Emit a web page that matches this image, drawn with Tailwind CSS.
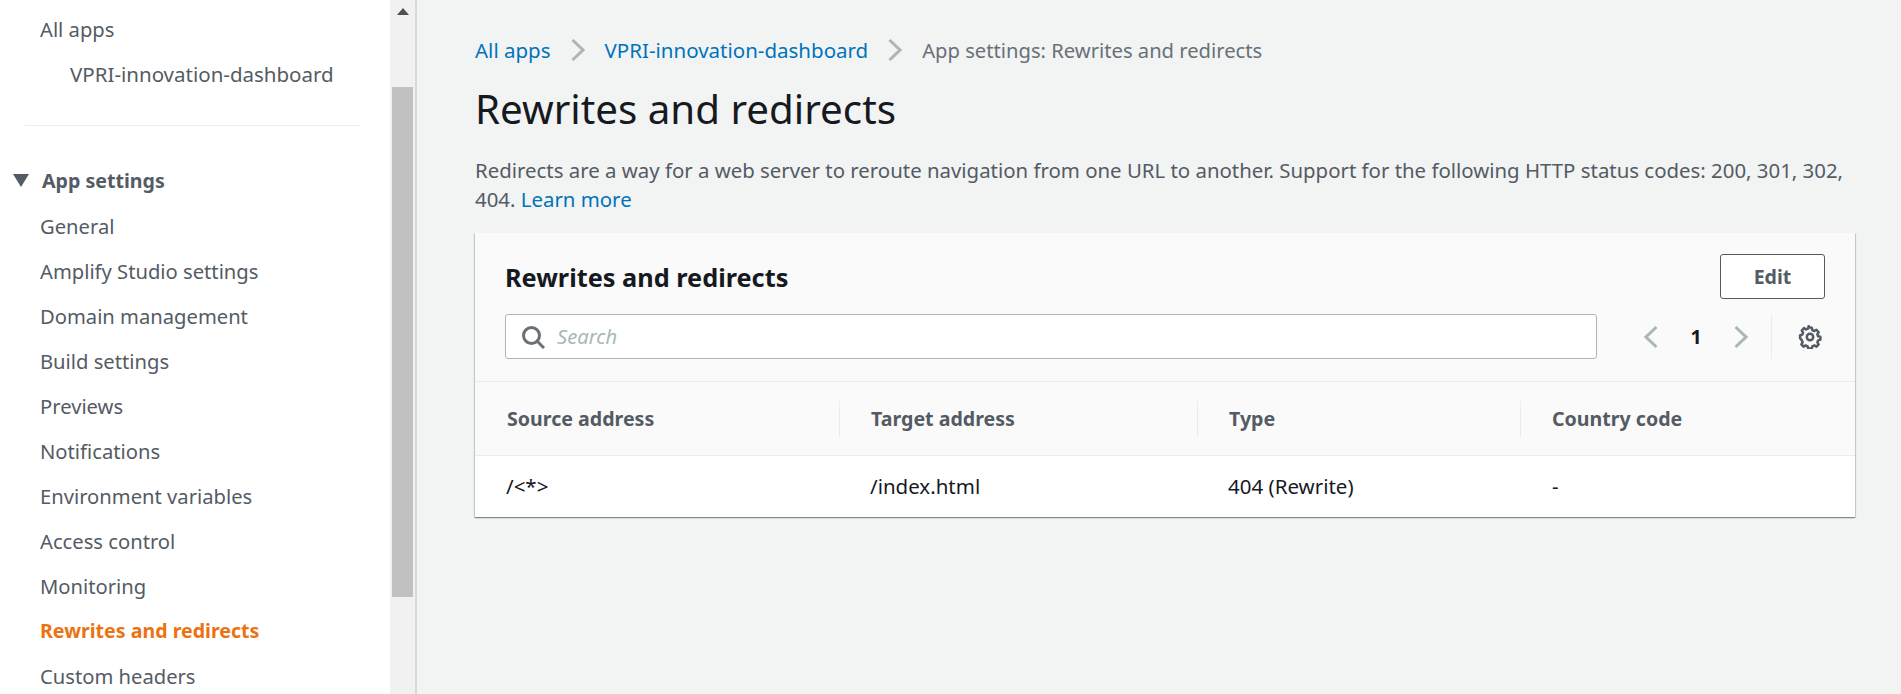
<!DOCTYPE html>
<html lang="en">
<head>
    <meta charset="UTF-8">
    <title>Rewrites and redirects</title>
    <script src="https://cdn.jsdelivr.net/npm/@tailwindcss/browser@4"></script>
</head>
<body class="h-[694px] overflow-hidden bg-[#f2f3f3] font-['Noto_Sans',sans-serif] text-[20.2px] text-[#545b64]">
    <div class="flex h-[694px]">
        <!-- Sidebar -->
        <aside class="flex w-[417px] shrink-0 border-r-2 border-[#d5dbdb] bg-white">
            <nav class="w-[390px] shrink-0 overflow-hidden">
                <div class="pl-[40px] pt-[14px] leading-[30px]">All apps</div>
                <div class="pl-[70px] pt-[15px] text-[20.5px] leading-[30px]">VPRI-innovation-dashboard</div>
                <div class="ml-[25px] mr-[30px] mt-[36px] border-t border-[#eaeded]"></div>
                <div class="mt-[40px] flex items-center pl-[13px] text-[19.6px] font-bold leading-[30px]">
                    <svg class="mr-[12px] h-[14px] w-[17px]" viewBox="0 0 17 14"><path d="M0 0H16L8 13Z" fill="#545b64"/></svg>
                    App settings
                </div>
                <ul class="mt-[15px] flex flex-col gap-[15px] pl-[40px] leading-[30px]">
                    <li>General</li>
                    <li>Amplify Studio settings</li>
                    <li>Domain management</li>
                    <li>Build settings</li>
                    <li>Previews</li>
                    <li>Notifications</li>
                    <li>Environment variables</li>
                    <li>Access control</li>
                    <li>Monitoring</li>
                    <li class="text-[19.6px] font-bold text-[#ec7211]">Rewrites and redirects</li>
                    <li>Custom headers</li>
                </ul>
            </nav>
            <!-- Scrollbar -->
            <div class="flex w-[25px] shrink-0 flex-col bg-[#f1f1f1] pl-[2px]">
                <svg class="ml-[5px] mt-[8px] h-[7px] w-[12px]" viewBox="0 0 12 7"><path d="M6 0L12 7H0Z" fill="#505050"/></svg>
                <div class="mt-[72px] h-[510px] w-[21px] bg-[#c1c1c1]"></div>
            </div>
        </aside>

        <!-- Main -->
        <main class="min-w-0 flex-1 pl-[58px] pr-[46px]">
            <div class="flex items-center pt-[35px] text-[20.5px] leading-[30px]">
                <a class="text-[#0073bb]">All apps</a>
                <svg class="mx-[20px] h-[22px] w-[14px]" viewBox="0 0 14 22"><path d="M1.5 1L12 11L1.5 21" fill="none" stroke="#aab7b8" stroke-width="3"/></svg>
                <a class="text-[#0073bb]">VPRI-innovation-dashboard</a>
                <svg class="mx-[20px] h-[22px] w-[14px]" viewBox="0 0 14 22"><path d="M1.5 1L12 11L1.5 21" fill="none" stroke="#aab7b8" stroke-width="3"/></svg>
                <span class="text-[20.2px] text-[#687078]">App settings: Rewrites and redirects</span>
            </div>
            <h1 class="mt-[19px] text-[40.3px] leading-[50px] text-[#16191f]">Rewrites and redirects</h1>
            <p class="mt-[22px] w-[1380px] text-[20.4px] leading-[29px]">Redirects are a way for a web server to reroute navigation from one URL to another. Support for the following HTTP status codes: 200, 301, 302, 404. <a class="text-[#0073bb]">Learn more</a></p>

            <!-- Card -->
            <section class="mt-[19px] bg-white shadow-[0_1px_1px_0_rgba(0,28,36,0.3),1px_1px_1px_0_rgba(0,28,36,0.15),-1px_1px_1px_0_rgba(0,28,36,0.15)]">
                <div class="h-[149px] border-b border-[#eaeded] bg-[#fafafa] px-[30px]">
                    <div class="flex items-center justify-between pt-[21px]">
                        <h2 class="text-[25.3px] font-bold leading-[44px] text-[#16191f]">Rewrites and redirects</h2>
                        <button class="h-[45px] w-[105px] rounded-[3px] border border-[#545b64] bg-white text-[19.6px] font-bold">Edit</button>
                    </div>
                    <div class="mt-[15px] flex items-center">
                        <div class="flex h-[45px] w-[1092px] items-center rounded-[3px] border border-[#aab7b8] bg-white pl-[15px]">
                            <svg class="h-[24px] w-[24px]" viewBox="0 0 24 24"><circle cx="10.5" cy="10.5" r="8" fill="none" stroke="#687078" stroke-width="3"/><path d="M16 16L23 23" stroke="#687078" stroke-width="3"/></svg>
                            <span class="ml-[12px] italic text-[#aab7b8]">Search</span>
                        </div>
                        <div class="ml-[47px] flex items-center">
                            <svg class="h-[24px] w-[14px]" viewBox="0 0 14 24"><path d="M12.5 2L2 12L12.5 22" fill="none" stroke="#aab7b8" stroke-width="3"/></svg>
                            <span class="mx-[32px] w-[12px] text-center text-[19.6px] font-bold text-[#16191f]">1</span>
                            <svg class="h-[24px] w-[14px]" viewBox="0 0 14 24"><path d="M1.5 2L12 12L1.5 22" fill="none" stroke="#aab7b8" stroke-width="3"/></svg>
                            <div class="ml-[23px] h-[45px] border-l border-[#eaeded]"></div>
                            <svg class="ml-[26px] h-[24px] w-[24px]" viewBox="0 0 24 24"><path d="M12 2l2 .2.6 2.6 2.3 1 2.3-1.4 2.4 2.8-1.4 2.2.8 2.2 2.5.6v3.4l-2.5.6-.8 2.2 1.4 2.2-2.4 2.5-2.3-1.3-2.3 1-.6 2.4h-4l-.6-2.4-2.3-1-2.3 1.3-2.4-2.5 1.4-2.2-.8-2.2L1 13.8v-3.4l2.5-.6.8-2.2-1.4-2.2 2.4-2.8 2.3 1.4 2.3-1 .6-2.6z" transform="translate(1.2 .8) scale(.9)" fill="none" stroke="#545b64" stroke-width="2.8" stroke-linejoin="round"/><circle cx="12" cy="12" r="3.2" fill="none" stroke="#545b64" stroke-width="2.5"/></svg>
                        </div>
                    </div>
                </div>
                <div class="grid h-[74px] grid-cols-[365px_358px_323px_1fr] items-center border-b border-[#eaeded] bg-[#fafafa] text-[19.6px] font-bold">
                    <div class="ml-[32px] flex h-[36px] items-center border-r border-[#eaeded]">Source address</div>
                    <div class="flex h-[36px] items-center border-r border-[#eaeded] pl-[31px]">Target address</div>
                    <div class="flex h-[36px] items-center border-r border-[#eaeded] pl-[31px]">Type</div>
                    <div class="pl-[31px]">Country code</div>
                </div>
                <div class="grid h-[61px] grid-cols-[365px_358px_323px_1fr] items-center text-[20.5px] text-[#16191f]">
                    <div class="pl-[31px]">/&lt;*&gt;</div>
                    <div class="pl-[30px]">/index.html</div>
                    <div class="pl-[30px]">404 (Rewrite)</div>
                    <div class="pl-[31px]">-</div>
                </div>
            </section>
        </main>
    </div>
</body>
</html>
